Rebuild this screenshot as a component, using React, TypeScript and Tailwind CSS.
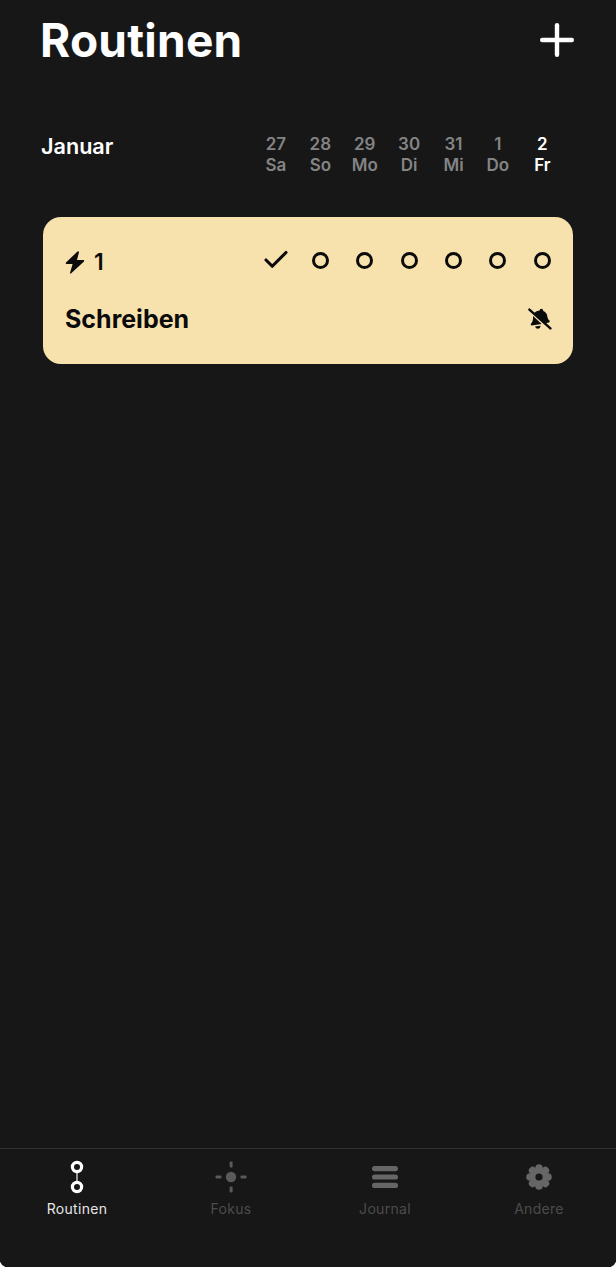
import React from 'react';
import { Check } from 'lucide-react';

const days = [
  { num: '27', name: 'Sa' },
  { num: '28', name: 'So' },
  { num: '29', name: 'Mo' },
  { num: '30', name: 'Di' },
  { num: '31', name: 'Mi' },
  { num: '1', name: 'Do' },
  { num: '2', name: 'Fr', today: true },
];

const marks = [true, false, false, false, false, false, false];

const RoutineIcon = () => (
  <svg width="28" height="34" viewBox="0 0 28 34" fill="none">
    <line x1="14" y1="8" x2="14" y2="26" stroke="#9a9a9a" strokeWidth="2" />
    <circle cx="14" cy="7" r="4.6" stroke="#fff" strokeWidth="3.2" fill="#171717" />
    <circle cx="14" cy="27" r="4.6" stroke="#fff" strokeWidth="3.2" fill="#171717" />
  </svg>
);

const FocusIcon = () => (
  <svg width="32" height="32" viewBox="0 0 32 32" fill="#5a5a5a">
    <circle cx="16" cy="16" r="5.2" />
    <rect x="14.6" y="0.5" width="3" height="6" rx="1" />
    <rect x="14.6" y="25.5" width="3" height="6" rx="1" />
    <rect x="0.5" y="14.6" width="6" height="3" rx="1" />
    <rect x="25.5" y="14.6" width="6" height="3" rx="1" />
  </svg>
);

const JournalIcon = () => (
  <svg width="28" height="24" viewBox="0 0 28 24" fill="#666666">
    <rect x="1" y="1" width="26" height="5.2" rx="2.6" />
    <rect x="1" y="9.4" width="26" height="5.2" rx="2.6" />
    <rect x="1" y="17.8" width="26" height="5.2" rx="2.6" />
  </svg>
);

const GearIcon = () => (
  <svg width="28" height="28" viewBox="0 0 28 28">
    <g fill="#666666">
      {[0, 45, 90, 135, 180, 225, 270, 315].map((a) => (
        <circle key={a} cx="14" cy="5" r="3.8" transform={`rotate(${a} 14 14)`} />
      ))}
      <circle cx="14" cy="14" r="9" />
    </g>
    <circle cx="14" cy="14" r="3.6" fill="#171717" />
  </svg>
);

const MutedBell = () => (
  <svg width="24" height="22" viewBox="0 0 24 22" fill="#0b0b0b">
    <path d="M11.5 2.4 Q12 0.4 14 1 Q15.6 1.6 15.2 3 Q18.8 4.4 19.2 8 Q19.4 11 21.6 12.8 Q22.2 13.8 21 14.4 L17 15.2 L6 5 Q8.5 2.6 11.5 2.4 Z" />
    <path d="M5 8 L13.6 16 L3.6 17.4 Q2.4 17.4 2.8 16 Q5.4 13.4 5 8 Z" />
    <path d="M7 18.4 L12.6 17.8 Q12.2 20.8 9.8 20.8 Q7.8 20.8 7 18.4 Z" />
    <path d="M1.4 1.6 L22.4 20.4" stroke="#0b0b0b" strokeWidth="2.4" strokeLinecap="round" fill="none" />
  </svg>
);

const tabs = [
  { label: 'Routinen', icon: <RoutineIcon />, active: true },
  { label: 'Fokus', icon: <FocusIcon /> },
  { label: 'Journal', icon: <JournalIcon /> },
  { label: 'Andere', icon: <GearIcon /> },
];

export default function App() {
  return (
    <div className="relative flex h-[1267px] w-[616px] flex-col overflow-hidden bg-[#171717] font-['Inter',sans-serif] text-white">
      <header className="flex h-[80px] items-center justify-between pl-[40px] pr-[42px]">
        <h1 className="text-[46px] leading-none font-bold tracking-[0.25px]">Routinen</h1>
        <svg width="34" height="34" viewBox="0 0 34 34" stroke="#fff" strokeWidth="4.4" strokeLinecap="round">
          <line x1="17" y1="2.2" x2="17" y2="31.8" />
          <line x1="2.2" y1="17" x2="31.8" y2="17" />
        </svg>
      </header>

      <div className="mt-[54px] flex h-[40px] justify-between pl-[41px] pr-[51.5px]">
        <span className="text-[21.6px] leading-[24px] font-semibold">Januar</span>
        <div className="flex">
          {days.map((d) => (
            <div
              key={d.num}
              className={`flex w-[44.4px] flex-col items-center text-[17px] leading-[21px] font-semibold ${d.today ? 'text-white' : 'text-[#848484]'}`}
            >
              <span>{d.num}</span>
              <span>{d.name}</span>
            </div>
          ))}
        </div>
      </div>

      <section className="mx-[43px] mt-[43px] flex h-[147px] flex-col rounded-[18px] bg-[#f7e2ae] pl-[22px] pr-[8.5px] text-[#0b0b0b]">
        <div className="mt-[28px] flex items-center justify-between">
          <div className="mt-[4px] flex items-center gap-[9px]">
            <svg width="20" height="23" viewBox="0 0 20 23" fill="#0b0b0b">
              <path d="M12.5 0.5 L1 11.5 Q0.2 12.6 1.6 13 L7.6 13 L5 22 Q5.2 23 6.2 22.2 L19 10.4 Q19.6 9.2 18.4 9 L12 9 L14 1.2 Q13.6 -0.2 12.5 0.5 Z" />
            </svg>
            <span className="text-[23px] leading-none font-semibold">1</span>
          </div>
          <div className="flex">
            {marks.map((done, i) => (
              <div key={i} className="flex h-[30px] w-[44.4px] items-center justify-center">
                {done ? (
                  <Check size={30} strokeWidth={2.5} />
                ) : (
                  <span className="h-[17px] w-[17px] rounded-full border-[3.4px] border-[#0b0b0b]" />
                )}
              </div>
            ))}
          </div>
        </div>
        <div className="mt-[28px] flex items-center justify-between pr-[13px]">
          <span className="text-[25px] leading-[32px] font-bold">Schreiben</span>
          <MutedBell />
        </div>
      </section>

      <nav className="mt-auto flex h-[119px] border-t border-[#333333]">
        {tabs.map((t) => (
          <div key={t.label} className="flex flex-1 flex-col items-center">
            <div className="flex h-[44px] w-full items-center justify-center pt-[12px]">{t.icon}</div>
            <span className={`mt-[6px] text-[14px] leading-[20px] tracking-[0.3px] ${t.active ? 'text-[#e6e6e6]' : 'text-[#4c4c4c]'}`}>
              {t.label}
            </span>
          </div>
        ))}
      </nav>

      {/* screen corners showing through at the bottom */}
      <svg className="absolute bottom-0 left-0" width="6" height="6" viewBox="0 0 8 8" fill="#ffffff">
        <path d="M0 1 Q2 6 7 8 L0 8 Z" />
      </svg>
      <svg className="absolute bottom-0 right-0" width="6" height="6" viewBox="0 0 8 8" fill="#ffffff">
        <path d="M8 1 Q6 6 1 8 L8 8 Z" />
      </svg>
    </div>
  );
}
